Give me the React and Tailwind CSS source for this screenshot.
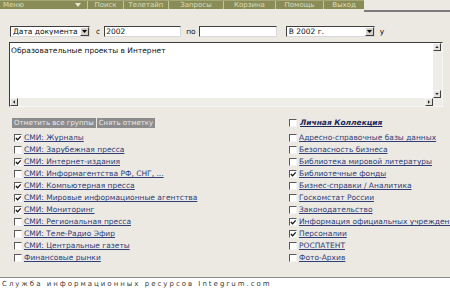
import React from 'react';

const menu = [
    { label: 'Меню', w: 'w-[87px]', arrow: true },
    { label: 'Поиск', w: 'w-[36px]' },
    { label: 'Телетайп', w: 'w-[45px]' },
    { label: 'Запросы', w: 'w-[55px]' },
    { label: 'Корзина', w: 'w-[52px]' },
    { label: 'Помощь', w: 'w-[48px]' },
    { label: 'Выход', w: 'w-[41px]' },
];

const leftGroups = [
    ['СМИ: Журналы', true],
    ['СМИ: Зарубежная пресса', false],
    ['СМИ: Интернет-издания', true],
    ['СМИ: Информагентства РФ, СНГ, ...', false],
    ['СМИ: Компьютерная пресса', true],
    ['СМИ: Мировые информационные агентства', true],
    ['СМИ: Мониторинг', true],
    ['СМИ: Региональная пресса', false],
    ['СМИ: Теле-Радио Эфир', false],
    ['СМИ: Центральные газеты', false],
    ['Финансовые рынки', false],
];

const rightGroups = [
    ['Адресно-справочные базы данных', false],
    ['Безопасность бизнеса', false],
    ['Библиотека мировой литературы', false],
    ['Библиотечные фонды', true],
    ['Бизнес-справки / Аналитика', false],
    ['Госкомстат России', false],
    ['Законодательство', false],
    ['Информация официальных учреждений', true],
    ['Персоналии', true],
    ['РОСПАТЕНТ', false],
    ['Фото-Архив', false],
];

function CheckBox({ checked }) {
    return (
        <span className="relative inline-block w-[8px] h-[8px] shrink-0 bg-white border-t border-l border-[#5a5a5a] border-r border-b border-r-[#f4f4f4] border-b-[#f4f4f4]">
            {checked && (
                <svg viewBox="0 0 8 8" className="absolute left-0 top-0 w-[7px] h-[7px]">
                    <path d="M1 3.5 L3 5.5 L6.5 1.5" stroke="#111" strokeWidth="1.5" fill="none" />
                </svg>
            )}
        </span>
    );
}

function Row({ label, checked }) {
    return (
        <div className="flex items-center h-[12px] gap-[1px] whitespace-nowrap">
            <CheckBox checked={checked} />
            <a className="text-[#2f3d78] underline leading-none ml-[1px]">{label}</a>
        </div>
    );
}

function SelectBox({ value, w }) {
    return (
        <div className={`flex items-center h-[11px] ${w} bg-white border-t border-l border-[#404040] border-r border-b border-r-[#d8d8d8] border-b-[#d8d8d8]`}>
            <span className="flex-1 pl-[2px] leading-none whitespace-nowrap overflow-hidden">{value}</span>
            <span className="flex items-center justify-center w-[9px] h-[9px] bg-[#d4d0c8] border-t border-l border-white border-r border-b border-r-[#404040] border-b-[#404040]">
                <svg viewBox="0 0 5 3" className="w-[5px] h-[3px]">
                    <path d="M0 0 H5 L2.5 3 Z" fill="#000" />
                </svg>
            </span>
        </div>
    );
}

function ArrowBox({ dir }) {
    const d = {
        up: 'M0 3 H5 L2.5 0 Z',
        down: 'M0 0 H5 L2.5 3 Z',
        left: 'M3 0 V5 L0 2.5 Z',
        right: 'M0 0 V5 L3 2.5 Z',
    }[dir];
    const vb = dir === 'up' || dir === 'down' ? '0 0 5 3' : '0 0 3 5';
    return (
        <span className="flex items-center justify-center w-[8px] h-[8px] bg-[#e4e2dc] border-t border-l border-[#f8f8f8] border-r border-b border-r-[#404040] border-b-[#404040]">
            <svg viewBox={vb} className={dir === 'up' || dir === 'down' ? 'w-[4px] h-[2px]' : 'w-[2px] h-[4px]'}>
                <path d={d} fill="#222" />
            </svg>
        </span>
    );
}

export default function App() {
    return (
        <div className="w-[450px] h-[290px] overflow-hidden bg-[#ece9e3] flex flex-col font-['DejaVu_Sans',sans-serif] text-[7.5px] text-[#111]">
            {/* top menu */}
            <div className="flex h-[12px] shrink-0">
                <div className="flex h-[9px] bg-[#8a8c57] border-t border-[#a3a572]">
                    {menu.map((m, i) => (
                        <div
                            key={m.label}
                            className={`${m.w} flex items-center ${m.arrow ? 'justify-between pl-[3px] pr-[6px]' : 'justify-center'} text-[#dcdcb8] text-[7px] leading-none ${i > 0 ? 'border-l border-[#c2c39a]' : ''}`}
                        >
                            <span>{m.label}</span>
                            {m.arrow && (
                                <svg viewBox="0 0 6 4" className="w-[6px] h-[4px]">
                                    <path d="M0 0 H6 L3 4 Z" fill="#e6e6cc" />
                                </svg>
                            )}
                        </div>
                    ))}
                </div>
                <div className="flex-1 border-b-2 border-[#7b7b7b]" />
            </div>

            {/* date row */}
            <div className="flex items-center mt-[14px] h-[11px] pl-[10px] whitespace-nowrap">
                <SelectBox value="Дата документа" w="w-[80px]" />
                <span className="ml-[6px] mr-[4px]">с</span>
                <div className="w-[77px] h-[11px] bg-white border-t border-l border-[#404040] border-r border-b border-r-[#d8d8d8] border-b-[#d8d8d8] pl-[1px] leading-[9px]">2002</div>
                <span className="ml-[5px] mr-[3px]">по</span>
                <div className="w-[78px] h-[11px] bg-white border-t border-l border-[#404040] border-r border-b border-r-[#d8d8d8] border-b-[#d8d8d8]" />
                <span className="w-[9px]" />
                <SelectBox value="В 2002 г." w="w-[89px]" />
                <span className="ml-[5px]">у</span>
            </div>

            {/* query area */}
            <div className="ml-[9px] mt-[5px] w-[434px] h-[65px] flex flex-col border-t border-l border-[#3c3c3c] border-r border-b border-r-[#f6f6f6] border-b-[#f6f6f6]">
                <div className="flex flex-1 min-h-0">
                    <div className="flex-1 bg-white pl-[1px] pt-[4px] leading-none">
                        Образовательные проекты в Интернет
                    </div>
                    <div className="w-[9px] flex flex-col justify-between bg-[#efede8]">
                        <ArrowBox dir="up" />
                        <ArrowBox dir="down" />
                    </div>
                </div>
                <div className="h-[8px] flex justify-between bg-[#efede8]">
                    <ArrowBox dir="left" />
                    <div className="flex">
                        <ArrowBox dir="right" />
                        <span className="w-[9px]" />
                    </div>
                </div>
            </div>

            {/* groups */}
            <div className="flex mt-[11px]">
                <div className="w-[277px] pl-[12px]">
                    <div className="flex gap-[1px] h-[10px]">
                        <span className="bg-[#8c8c8c] text-[#ebebeb] text-[7px] leading-[10px] px-[2px] whitespace-nowrap">Отметить все группы</span>
                        <span className="bg-[#8c8c8c] text-[#ebebeb] text-[7px] leading-[10px] px-[2px] whitespace-nowrap">Снять отметку</span>
                    </div>
                    <div className="mt-[4px] pl-[2px]">
                        {leftGroups.map(([label, checked]) => (
                            <Row key={label} label={label} checked={checked} />
                        ))}
                    </div>
                </div>
                <div className="flex-1 pl-[12px] min-w-0 overflow-hidden">
                    <div className="flex items-center h-[10px] gap-[2px] whitespace-nowrap">
                        <CheckBox checked={false} />
                        <span className="font-bold italic underline text-[#1f2a5c] ml-[1px] leading-none">Личная Коллекция</span>
                    </div>
                    <div className="mt-[4px]">
                        {rightGroups.map(([label, checked]) => (
                            <Row key={label} label={label} checked={checked} />
                        ))}
                    </div>
                </div>
            </div>

            {/* footer */}
            <div className="mt-auto h-[13px] shrink-0 bg-white border-t border-[#8a8a8a] flex items-center pl-[2px] text-[7px] tracking-[2px] text-[#3a3a3a] whitespace-nowrap">
                Служба информационных ресурсов Integrum.com
            </div>
        </div>
    );
}
